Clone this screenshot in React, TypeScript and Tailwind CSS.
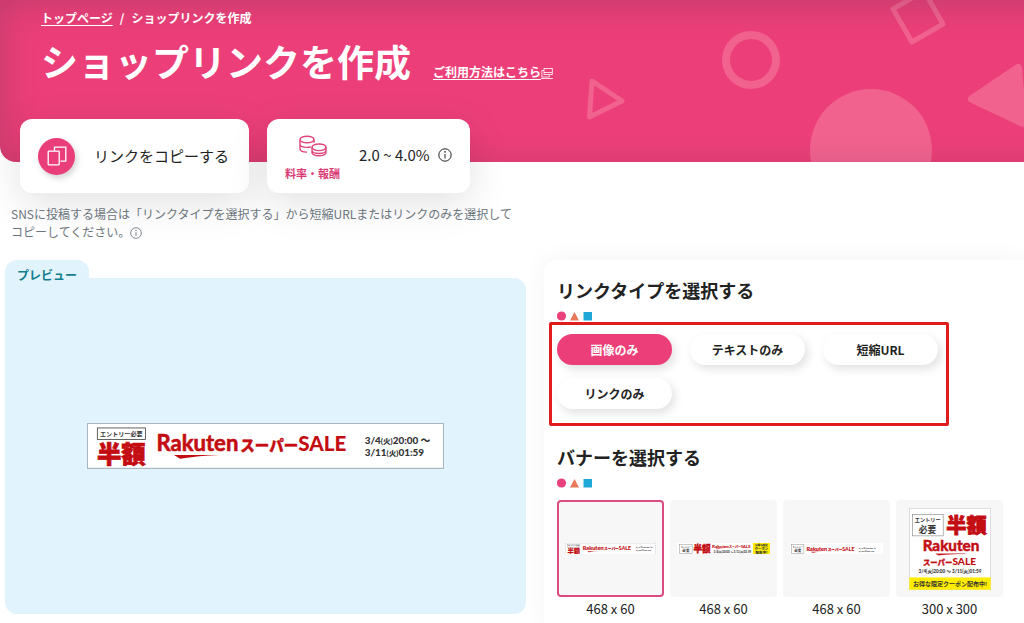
import { useState } from 'react'
import type { ReactNode } from 'react'
import clsx from 'clsx'

type LinkType = 'image' | 'text' | 'short' | 'link'

const LINK_TYPES: { id: LinkType; label: string }[] = [
  { id: 'image', label: '画像のみ' },
  { id: 'text', label: 'テキストのみ' },
  { id: 'short', label: '短縮URL' },
  { id: 'link', label: 'リンクのみ' },
]

const BANNERS: { id: string; size: string; art: ReactNode }[] = [
  { id: 'a', size: '468 x 60', art: <WideBanner className="w-[91px]" /> },
  { id: 'b', size: '468 x 60', art: <CouponBanner className="w-[93px]" /> },
  { id: 'c', size: '468 x 60', art: <EntryBanner className="w-[93px]" /> },
  { id: 'd', size: '300 x 300', art: <SquareBanner className="w-[82px]" /> },
]

const RED = '#c30d12'

/* ── ICONS ──────────────────────────────────────────── */

function CopyIcon() {
  return (
    <svg viewBox="0 0 20 20" className="size-5" fill="none" stroke="white" strokeWidth="1.3" aria-hidden="true">
      <path d="M7.5 5V1.2h11.3v14h-5.3" />
      <rect x="1.2" y="5.2" width="11" height="13.6" rx="0.5" />
    </svg>
  )
}

function CoinsIcon() {
  return (
    <svg viewBox="0 0 28 22" className="h-[22px] w-7" fill="none" stroke="#e0457b" strokeWidth="1.4" aria-hidden="true">
      <ellipse cx="8" cy="4.5" rx="7" ry="3.3" />
      <path d="M1 4.500v9.500c0 1.700 3 3 7 3.100M15 4.500v3.300M1 9.300c0 1.700 3 3.100 7 3.100 1.400 0 2.800-.2 3.900-.5" />
      <ellipse cx="20" cy="12.300" rx="7" ry="3.300" />
      <path d="M13 12.300v5.200c0 1.800 3.100 3.300 7 3.300s7-1.500 7-3.300v-5.200M13 15.300c0 1.800 3.100 3.200 7 3.200s7-1.400 7-3.200" />
    </svg>
  )
}

function InfoIcon({ className }: { className: string }) {
  return (
    <svg viewBox="0 0 14 14" className={className} fill="none" stroke="currentColor" aria-hidden="true">
      <circle cx="7" cy="7" r="6.2" />
      <path d="M7 6v4.500" />
      <circle cx="7" cy="3.900" r="0.400" fill="currentColor" />
    </svg>
  )
}

function ExternalIcon() {
  return (
    <svg viewBox="0 0 12 12" className="inline size-3 align-[-2px]" fill="none" stroke="currentColor" strokeWidth="0.8" aria-hidden="true">
      <rect x="3" y="1.500" width="8.300" height="6" />
      <path d="M3 3.500H.8V10h7.500V7.500M3 5.500h8M0 11.500h12" />
    </svg>
  )
}

function HeroShapes() {
  return (
    <svg
      viewBox="0 0 464 162"
      className="absolute top-0 right-0 h-[162px] w-[464px]"
      stroke="#f2628f"
      fill="none"
      strokeLinejoin="round"
      aria-hidden="true"
    >
      <path d="M32 81l30 20-32.500 16z" strokeWidth="5" />
      <circle cx="191" cy="60" r="25" strokeWidth="8" />
      <path d="M333 9l19 33 31-18-19-33z" strokeWidth="5" />
      <circle cx="311" cy="150" r="61" fill="#f2628f" stroke="none" />
      <path d="M412 99l46-31 5 55z" fill="#f2628f" strokeWidth="8" />
    </svg>
  )
}

function Marks() {
  return (
    <svg viewBox="0 0 36 10" className="h-2.5 w-9" aria-hidden="true">
      <circle cx="4.500" cy="5" r="4.600" fill="#e8417c" />
      <path d="M17.500 1l4.500 8.500h-9z" fill="#e9775b" />
      <rect x="26.500" y="1" width="8.500" height="8.500" fill="#1fa7d8" />
    </svg>
  )
}

/* ── BANNER ART ─────────────────────────────────────── */

const jp = "font-['Liberation_Sans','Noto_Sans_CJK_JP',sans-serif]"
const latin = "font-['Lato','Noto_Sans_CJK_JP',sans-serif]"

function SaleLogo() {
  return (
    <g fill={RED}>
      <text x="-2" y="27" fontSize="29" fontWeight="700" stroke={RED} strokeWidth="0.8" className={latin}>Rakuten</text>
      <path d="M21 32h60q-28 1-52 5z" />
      <text x="108" y="27" fontSize="19" fontWeight="900" stroke={RED} strokeWidth="0.5" className={jp}>スーパー</text>
      <text x="184" y="27" fontSize="27" fontWeight="900" className={latin}>SALE</text>
    </g>
  )
}

function Dates() {
  return (
    <g fill="#333" fontSize="13" fontWeight="900" className={latin}>
      <text x="0" y="13">3/4<tspan fontSize="10">(火)</tspan>20:00 〜</text>
      <text x="0" y="28">3/11<tspan fontSize="10">(火)</tspan>01:59</text>
    </g>
  )
}

function WideBanner({ className }: { className: string }) {
  return (
    <svg viewBox="0 0 468 60" className={clsx('h-auto', className)} role="img" aria-label="Rakuten スーパーSALE">
      <rect x="0.500" y="0.500" width="467" height="59" fill="white" stroke="#a9b4ba" strokeWidth="1.500" />
      <rect x="13.500" y="6.500" width="63" height="15" fill="white" stroke="#333" />
      <text x="17" y="17" fontSize="8" fontWeight="700" fill="#333" className={jp}>エントリー必要</text>
      <text x="13" y="52" fontSize="32" fontWeight="900" fill={RED} stroke={RED} className={jp}>半額</text>
      <g transform="translate(93 10)"><SaleLogo /></g>
      <g transform="translate(364 15)"><Dates /></g>
    </svg>
  )
}

function EntryBox() {
  return (
    <g fill="#333" fontWeight="700" className={jp}>
      <rect width="62" height="46" fill="white" stroke="#777" strokeWidth="2" />
      <text x="6" y="16" fontSize="10">エントリー</text>
      <text x="13" y="38" fontSize="18">必要</text>
    </g>
  )
}

function CouponBanner({ className }: { className: string }) {
  return (
    <svg viewBox="0 0 468 60" className={clsx('h-auto', className)} role="img" aria-label="半額 クーポン配布中">
      <rect width="468" height="60" fill="white" />
      <g transform="translate(14 8)"><EntryBox /></g>
      <text x="83" y="46" fontSize="43" fontWeight="900" fill={RED} stroke={RED} strokeWidth="2" className={jp}>半額</text>
      <g transform="translate(178 3) scale(.78)"><SaleLogo /></g>
      <text x="184" y="52" fontSize="14" fontWeight="900" fill="#333" className={latin}>3/4(火)20:00 〜 3/11(火)01:59</text>
      <rect x="382" width="86" height="60" fill="#ffec00" />
      <g fill="#333" fontWeight="900" textAnchor="middle" className={jp}>
        <text x="425" y="16" fontSize="13">お得な限定</text>
        <text x="425" y="34" fontSize="17">クーポン</text>
        <text x="425" y="53" fontSize="18">配布中!</text>
      </g>
    </svg>
  )
}

function EntryBanner({ className }: { className: string }) {
  return (
    <svg viewBox="0 0 468 60" className={clsx('h-auto', className)} role="img" aria-label="エントリー必要 スーパーSALE">
      <rect width="468" height="60" fill="white" />
      <g transform="translate(8 7)"><EntryBox /></g>
      <g transform="translate(85 13) scale(.97)"><SaleLogo /></g>
      <g transform="translate(346 15)"><Dates /></g>
    </svg>
  )
}

function SquareBanner({ className }: { className: string }) {
  return (
    <svg viewBox="0 0 300 300" className={clsx('h-auto', className)} role="img" aria-label="Rakuten スーパーSALE クーポン配布中">
      <rect x="1" y="1" width="298" height="298" fill="white" stroke="#c5c5c5" strokeWidth="2" />
      <rect x="13" y="24" width="112" height="78" fill="white" stroke="#777" strokeWidth="2" />
      <g fill="#333" fontWeight="700" className={jp}>
        <text x="21" y="53" fontSize="19">エントリー</text>
        <text x="36" y="91" fontSize="32">必要</text>
      </g>
      <g fill={RED} stroke={RED}>
        <text x="136" y="91" fontSize="74" fontWeight="900" strokeWidth="3" className={jp}>半額</text>
        <text x="50" y="158" fontSize="56" fontWeight="700" strokeWidth="2" className={latin}>Rakuten</text>
        <path d="M98 167h108q-60 1-98 6z" strokeWidth="1" />
        <text x="51" y="207" fontSize="27" fontWeight="900" className={jp}>スーパー</text>
        <text x="159" y="208" fontSize="37" fontWeight="900" strokeWidth="0" className={latin}>SALE</text>
      </g>
      <text x="150" y="236" fontSize="17" fontWeight="900" fill="#333" textAnchor="middle" className={latin}>
        3/4(火)20:00 〜 3/11(火)01:59
      </text>
      <rect x="1" y="254" width="298" height="45" fill="#ffec00" />
      <text x="150" y="285" fontSize="22" fontWeight="700" fill="#333" textAnchor="middle" className={jp}>
        お得な限定クーポン配布中!
      </text>
    </svg>
  )
}

/* ── PAGE ───────────────────────────────────────────── */

export default function App() {
  const [linkType, setLinkType] = useState<LinkType>('image')
  const [banner, setBanner] = useState('a')

  return (
    <div className="overflow-hidden bg-white font-['Noto_Sans_CJK_JP',sans-serif] text-[#222]">
      <header className="relative overflow-hidden rounded-bl-2xl bg-[#ec3f79] pt-[9px] pb-[79px] pl-[41px] text-white">
        <HeroShapes />
        <div className="pointer-events-none absolute inset-y-0 -right-10 left-0 shadow-[inset_4px_6px_32px_rgba(80,50,70,0.25)]" />
        <nav className="relative flex gap-[7px] text-xs leading-[18px] font-bold">
          <a href="#top" className="underline underline-offset-2">トップページ</a>
          <span>/</span>
          <span>ショップリンクを作成</span>
        </nav>
        <div className="relative mt-3 flex items-end gap-[22px]">
          <h1 className="text-[37px] leading-[44px] font-bold">ショップリンクを作成</h1>
          <a href="#help" className="pb-0.5 text-xs leading-[18px] font-bold underline underline-offset-2">
            ご利用方法はこちら<ExternalIcon />
          </a>
        </div>
      </header>

      <div className="relative -mt-[43px] flex gap-[18px] px-5">
        <button
          type="button"
          className="flex h-[74px] items-center gap-[19px] rounded-xl bg-white pr-5 pl-[18px] text-[15px] shadow-[0_10px_40px_rgba(0,0,0,0.12)]"
        >
          <span className="flex size-[37px] items-center justify-center rounded-full bg-[#e93e79] shadow-[2px_3px_6px_rgba(0,0,0,0.18)]">
            <CopyIcon />
          </span>
          リンクをコピーする
        </button>
        <div className="flex h-[74px] items-center gap-[19px] rounded-xl bg-white px-[18px] shadow-[0_10px_40px_rgba(0,0,0,0.12)]">
          <div className="flex flex-col items-center gap-2 pt-1 text-[11px] leading-4 font-bold text-[#d93c74]">
            <CoinsIcon />
            料率・報酬
          </div>
          <div className="flex items-center gap-2 pb-0.5 text-[15px]">
            2.0 ~ 4.0%
            <InfoIcon className="size-3.5" />
          </div>
        </div>
      </div>

      <p className="relative mt-3 pl-[11px] text-xs leading-[18px] text-[#6b757d]">
        SNSに投稿する場合は「リンクタイプを選択する」から短縮URLまたはリンクのみを選択して
        <br />
        コピーしてください。<InfoIcon className="inline size-3 align-[-2px]" />
      </p>

      <main className="mt-[19px] grid grid-cols-[17fr_15fr]">
        {/* Preview */}
        <section className="flex flex-col pr-[18px] pb-3 pl-[5px]">
          <h2 className="relative h-[18px] w-fit rounded-t-xl bg-[#e1f4fe] px-3 pt-1.5 text-xs leading-[18px] font-bold text-[#127d8c]">
            プレビュー
          </h2>
          <div className="flex min-h-[336px] flex-1 items-center justify-center rounded-xl rounded-tl-none bg-[#e1f4fe]">
            <WideBanner className="w-[357px]" />
          </div>
        </section>

        {/* Options */}
        <section className="rounded-tl-xl bg-white pt-4 pr-[21px] pl-[13px] shadow-[0_0_24px_rgba(0,0,0,0.05)]">
          <h2 className="text-lg leading-7 font-bold">リンクタイプを選択する</h2>
          <div className="mt-[7px] flex"><Marks /></div>
          <div className="mt-px -ml-2 grid w-fit grid-cols-3 gap-x-[18px] gap-y-[13px] rounded-xs border-3 border-[#df1b1b] pt-[9px] pr-2 pb-3.5 pl-[5px]">
            {LINK_TYPES.map((type) => (
              <button
                key={type.id}
                type="button"
                aria-pressed={linkType === type.id}
                onClick={() => setLinkType(type.id)}
                className={clsx(
                  'h-[31px] w-[115px] rounded-full text-xs font-bold shadow-[3px_4px_10px_rgba(0,0,0,0.12)]',
                  linkType === type.id ? 'bg-[#ec3f79] text-white' : 'bg-white',
                )}
              >
                {type.label}
              </button>
            ))}
          </div>

          <h2 className="mt-[17px] text-lg leading-7 font-bold">バナーを選択する</h2>
          <div className="mt-[7px] flex"><Marks /></div>
          <div className="mt-3 grid grid-cols-4 gap-[6px]">
            {BANNERS.map((b) => (
              <button
                key={b.id}
                type="button"
                aria-pressed={banner === b.id}
                onClick={() => setBanner(b.id)}
                className="flex flex-col text-[13px] leading-6"
              >
                <span
                  className={clsx(
                    'flex h-[97px] w-full items-center justify-center rounded-sm border-2 bg-[#f7f7f7]',
                    banner === b.id ? 'border-[#db4c80]' : 'border-transparent',
                  )}
                >
                  {b.art}
                </span>
                <span className="w-full text-center">{b.size}</span>
              </button>
            ))}
          </div>
        </section>
      </main>
    </div>
  )
}
